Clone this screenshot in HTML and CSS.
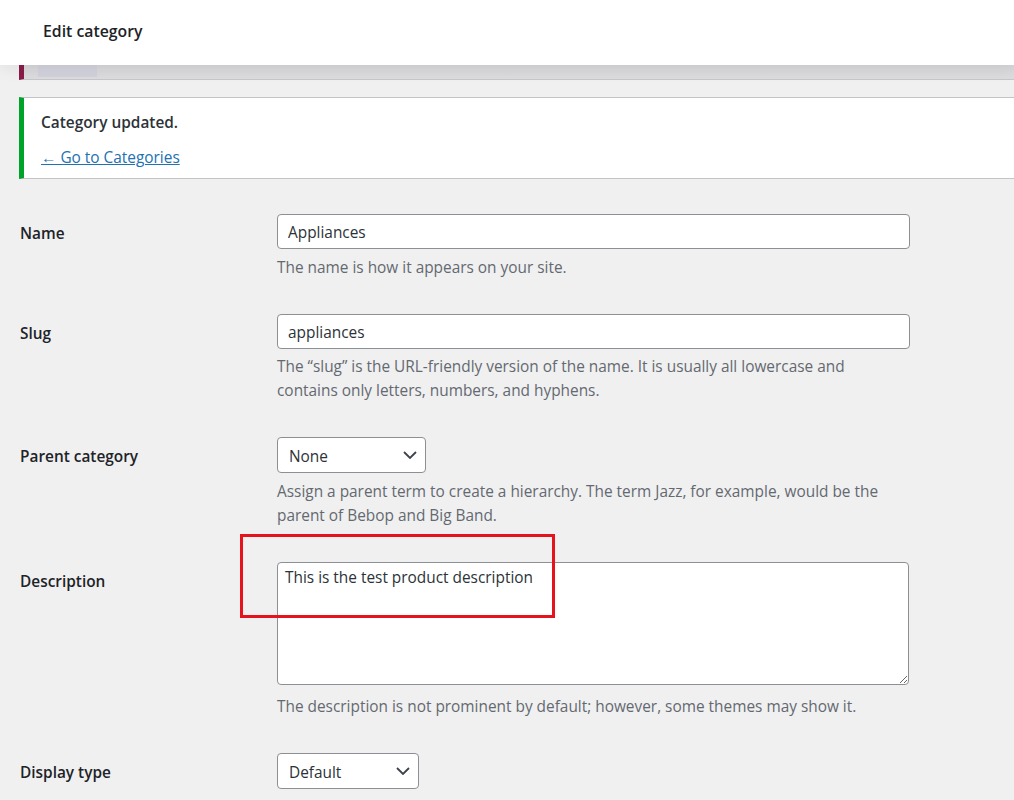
FILE: index.html
```html
<!DOCTYPE html>
<html lang="en">
<head>
  <meta charset="UTF-8">
  <title>Edit category</title>
  <link rel="stylesheet" href="styles.css">
</head>
<body>

<header class="topbar">
  <h1 class="topbar-title">Edit category</h1>
</header>

<div class="hidden-notice"><span class="hidden-notice-btn"></span></div>

<div class="notice">
  <p class="notice-title">Category updated.</p>
  <p class="notice-link"><a href="#">&larr; Go to Categories</a></p>
</div>

<form class="term-form">
  <div class="form-row">
    <label class="form-label" for="tag-name">Name</label>
    <div class="form-field">
      <input class="text-input" type="text" id="tag-name" value="Appliances">
      <p class="description">The name is how it appears on your site.</p>
    </div>
  </div>

  <div class="form-row">
    <label class="form-label" for="slug">Slug</label>
    <div class="form-field">
      <input class="text-input" type="text" id="slug" value="appliances">
      <p class="description slug-desc">The “slug” is the URL-friendly version of the name. It is usually all lowercase and contains only letters, numbers, and hyphens.</p>
    </div>
  </div>

  <div class="form-row">
    <label class="form-label" for="parent">Parent category</label>
    <div class="form-field">
      <span class="select-wrap">
        <select id="parent" class="select select-parent">
          <option>None</option>
        </select>
        <svg class="chevron" width="14" height="8" viewBox="0 0 14 8"><polyline points="1,1 7,7 13,1" fill="none" stroke="#3c434a" stroke-width="1.8"/></svg>
      </span>
      <p class="description">Assign a parent term to create a hierarchy. The term Jazz, for example, would be the parent of Bebop and Big Band.</p>
    </div>
  </div>

  <div class="form-row">
    <label class="form-label" for="description">Description</label>
    <div class="form-field">
      <textarea id="description" class="textarea">This is the test product description</textarea>
      <p class="description textarea-desc">The description is not prominent by default; however, some themes may show it.</p>
    </div>
  </div>

  <div class="form-row">
    <label class="form-label" for="display-type">Display type</label>
    <div class="form-field">
      <span class="select-wrap">
        <select id="display-type" class="select select-display">
          <option>Default</option>
        </select>
        <svg class="chevron" width="14" height="8" viewBox="0 0 14 8"><polyline points="1,1 7,7 13,1" fill="none" stroke="#3c434a" stroke-width="1.8"/></svg>
      </span>
    </div>
  </div>
</form>

<div class="highlight-box"></div>

</body>
</html>
```

FILE: styles.css
```css
body {
  margin: 0;
  background-color: #f0f0f1;
  font-family: "Open Sans", "Noto Sans", sans-serif;
  font-size: 15.4px;
  color: #3c434a;
}
.topbar {
  position: relative;
  z-index: 1;
  height: 65px;
  background-color: #fff;
  display: flex;
  align-items: center;
  padding: 0 0 3px 43px;
  box-sizing: border-box;
  box-shadow: 0 3px 16px rgba(0, 0, 0, 0.07);
}
.topbar-title {
  margin: 0;
  font-size: 15.8px;
  font-weight: 600;
  color: #1d2327;
}
.hidden-notice {
  display: flex;
  margin-left: 19px;
  height: 14px;
  padding-left: 14px;
  border-left: 5px solid #8a1c48;
  border-bottom: 1px solid #c6c6c9;
  background: linear-gradient(#d6d6d8, #dcdcde);
}
.hidden-notice-btn {
  width: 59px;
  height: 12px;
  background-color: #d1d1dc;
}
.notice {
  margin: 17px 0 0 19px;
  padding: 0 17px;
  background-color: #fff;
  border: 1px solid #c3c4c7;
  border-left: 5px solid #00a32a;
  border-right: 0;
}
.notice p {
  margin: 0;
  line-height: 24px;
}
.notice-title {
  padding-top: 13px;
  font-weight: 600;
  color: #2c3338;
}
.notice-link {
  padding: 11px 0 8px;
}
.notice-link a {
  color: #2271b1;
}
.term-form {
  margin-top: 17px;
}
.form-row {
  display: grid;
  grid-template-columns: 257px 633px;
  padding: 18px 0 17px 20px;
}
.form-label {
  padding-top: 8px;
  line-height: 24px;
  font-weight: 600;
  color: #1d2327;
}
.text-input {
  display: block;
  width: 100%;
  height: 35px;
  box-sizing: border-box;
  padding: 2px 10px 0;
  border: 1px solid #8c8f94;
  border-radius: 4px;
  background-color: #fff;
  font: inherit;
  color: #2c3338;
}
.description {
  max-width: 620px;
  margin: 7px 0 -1px;
  line-height: 24px;
  color: #646970;
}
.slug-desc {
  margin-top: 6px;
}
.select-wrap {
  position: relative;
  display: inline-block;
  vertical-align: top;
}
.select {
  display: block;
  height: 36px;
  padding: 2px 28px 0 11px;
  border: 1px solid #8c8f94;
  border-radius: 4px;
  background-color: #fff;
  font: inherit;
  color: #2c3338;
  appearance: none;
  -webkit-appearance: none;
}
.select-parent {
  width: 149px;
}
.select-display {
  width: 142px;
}
.chevron {
  position: absolute;
  right: 9px;
  top: 14px;
  pointer-events: none;
}
.textarea {
  display: block;
  width: 632px;
  height: 123px;
  box-sizing: border-box;
  padding: 3px 7px;
  border: 1px solid #8c8f94;
  border-radius: 4px;
  background-color: #fff;
  font: inherit;
  line-height: 24px;
  color: #2c3338;
  resize: vertical;
}
.textarea-desc {
  margin-top: 10px;
}
.highlight-box {
  position: absolute;
  top: 534px;
  left: 240px;
  width: 315px;
  height: 84px;
  box-sizing: border-box;
  border: 3px solid #e5131d;
}
```
